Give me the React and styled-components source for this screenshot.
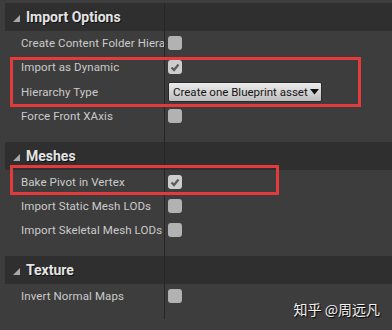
import React from "react";
import styled, { createGlobalStyle } from "styled-components";

const GlobalStyle = createGlobalStyle`
  html, body {
    margin: 0;
    padding: 0;
    background: #3d3d3d;
  }
`;

const sections = [
  {
    title: "Import Options",
    rows: [
      { label: "Create Content Folder Hierarchy", type: "check", checked: false },
      { label: "Import as Dynamic", type: "check", checked: true },
      { label: "Hierarchy Type", type: "select", value: "Create one Blueprint asset" },
      { label: "Force Front XAxis", type: "check", checked: false },
    ],
  },
  {
    title: "Meshes",
    rows: [
      { label: "Bake Pivot in Vertex", type: "check", checked: true },
      { label: "Import Static Mesh LODs", type: "check", checked: false },
      { label: "Import Skeletal Mesh LODs", type: "check", checked: false },
    ],
  },
  {
    title: "Texture",
    rows: [{ label: "Invert Normal Maps", type: "check", checked: false }],
  },
];

function Check({ checked }) {
  return (
    <Box $checked={checked}>
      {checked && (
        <svg width="14" height="14" viewBox="0 0 14 14">
          <path d="M3.5 7.5 L6 10 L10.5 4.5" fill="none" stroke="#5b5b5b" strokeWidth="2.2" />
        </svg>
      )}
    </Box>
  );
}

function App() {
  return (
    <>
      <GlobalStyle />
      <Panel>
        {sections.map((s, i) => (
          <Section key={s.title}>
            {i > 0 && (
              <Row $h={14}>
                <Name />
              </Row>
            )}
            <Header>
              <HeaderName>
                <svg width="7" height="7" viewBox="0 0 7 7">
                  <polygon points="7,0 7,7 0,7" fill="#a8a8a8" />
                </svg>
                <span>{s.title}</span>
              </HeaderName>
            </Header>
            {s.rows.map((r) => (
              <Row key={r.label} $h={r.type === "select" ? 25 : 24}>
                <Name>
                  <Label>{r.label}</Label>
                </Name>
                <Value>
                  {r.type === "check" ? (
                    <Check checked={r.checked} />
                  ) : (
                    <Select>
                      <span>{r.value}</span>
                      <svg width="9" height="6" viewBox="0 0 9 6">
                        <polygon points="0,0 9,0 4.5,5.5" fill="#111" />
                      </svg>
                    </Select>
                  )}
                </Value>
              </Row>
            ))}
          </Section>
        ))}
        <Row $h={11}>
          <Name />
        </Row>
        <Mark style={{ left: 10, top: 57, width: 351, height: 50 }} />
        <Mark style={{ left: 10, top: 165, width: 269, height: 30 }} />
        <Watermark>知乎 @周远凡</Watermark>
      </Panel>
    </>
  );
}

const Panel = styled.div`
  position: relative;
  width: 392px;
  height: 330px;
  box-sizing: border-box;
  padding-top: 3px;
  background: #3d3d3d;
  font-family: Roboto, "Liberation Sans", sans-serif;
  overflow: hidden;
`;

const Section = styled.div`
  display: flex;
  flex-direction: column;
`;

const Header = styled.div`
  display: flex;
  height: 28px;
  margin-left: 5px;
  background: #2f2f2f;
`;

const HeaderName = styled.div`
  display: flex;
  align-items: center;
  gap: 6px;
  width: 160px;
  padding-left: 8px;
  box-sizing: border-box;
  border-right: 1px solid #252525;
  color: #e4e4e4;
  font-size: 14px;
  font-weight: bold;
  text-shadow: 1px 1px 0 #111;

  svg {
    margin-top: 2px;
  }
`;

const Row = styled.div`
  display: flex;
  height: ${(p) => p.$h}px;
  margin-left: 5px;
`;

const Name = styled.div`
  display: flex;
  align-items: center;
  width: 160px;
  padding-left: 16px;
  box-sizing: border-box;
  border-right: 1px solid #252525;
  overflow: hidden;
`;

const Label = styled.span`
  white-space: nowrap;
  color: #cbcbcb;
  font-size: 11.5px;
  letter-spacing: 0.1px;
`;

const Value = styled.div`
  display: flex;
  align-items: center;
  padding-left: 3px;
`;

const Box = styled.div`
  width: 14px;
  height: 14px;
  border-radius: 3px;
  background: ${(p) => (p.$checked ? "#cdcdcd" : "#b2b2b2")};
  display: flex;
`;

const Select = styled.div`
  display: flex;
  align-items: center;
  gap: 2px;
  height: 20px;
  width: 154px;
  box-sizing: border-box;
  padding: 0 4px;
  border-radius: 2px;
  border: 1px solid #2a2a2a;
  background: linear-gradient(#ececec, #bdbdbd);
  color: #141414;
  font-size: 11.5px;
  white-space: nowrap;
  overflow: hidden;

  svg {
    flex-shrink: 0;
  }
`;

const Mark = styled.div`
  position: absolute;
  box-sizing: border-box;
  border: 3px solid #e33b3b;
`;

const Watermark = styled.div`
  position: absolute;
  right: 12px;
  bottom: 11px;
  color: #f2f2f2;
  font-size: 14px;
  font-family: "Noto Sans CJK SC", sans-serif;
  text-shadow: 1px 1px 1px #000;
`;

export default App;
